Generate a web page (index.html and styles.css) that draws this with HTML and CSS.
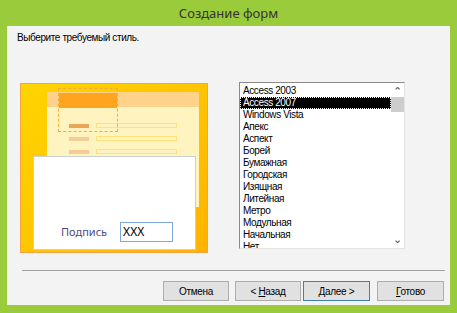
FILE: index.html
```html
<!DOCTYPE html>
<html lang="ru">
<head>
  <meta charset="UTF-8" />
  <title>Создание форм</title>
  <link rel="stylesheet" href="styles.css">
</head>
<body>

  <div class="ventana">
    <div class="titulo">Создание форм</div>

    <div class="contenido">
      <p class="aviso">Выберите требуемый стиль.</p>

      <div class="cuerpo">
        <div class="vista">
          <div class="forma">
            <div class="forma-cabecera"></div>
            <div class="fila"><span class="etiqueta oscura"></span><span class="campo"></span></div>
            <div class="fila"><span class="etiqueta"></span><span class="campo"></span></div>
            <div class="fila"><span class="etiqueta"></span><span class="campo"></span></div>
          </div>
          <div class="marco"><div class="marco-cabecera"></div></div>
          <div class="hoja">
            <span class="pie">Подпись</span>
            <span class="caja">XXX</span>
          </div>
        </div>

        <div class="lista">
          <ul class="items">
            <li>Access 2003</li>
            <li class="activo">Access 2007</li>
            <li>Windows Vista</li>
            <li>Апекс</li>
            <li>Аспект</li>
            <li>Борей</li>
            <li>Бумажная</li>
            <li>Городская</li>
            <li>Изящная</li>
            <li>Литейная</li>
            <li>Метро</li>
            <li>Модульная</li>
            <li>Начальная</li>
            <li>Нет</li>
          </ul>
          <div class="barra">
            <span class="flecha">&#8963;</span>
            <span class="cursor"></span>
            <span class="relleno"></span>
            <span class="flecha abajo">&#8964;</span>
          </div>
        </div>
      </div>

      <hr class="linea" />

      <div class="botones">
        <button>Отмена</button>
        <button class="pegado">&lt; <u>Н</u>азад</button>
        <button class="defecto"><u>Д</u>алее &gt;</button>
        <button class="ultimo"><u>Г</u>отово</button>
      </div>
    </div>
  </div>

</body>
</html>
```

FILE: styles.css
```css
* {
  box-sizing: border-box;
  margin: 0;
  padding: 0;
}

body {
  background: #9acb3a;
  font-family: 'Liberation Sans', Arial, sans-serif;
  font-size: 10px;
  letter-spacing: -0.4px;
  color: #000000;
}

.ventana {
  width: 457px;
  height: 313px;
  padding: 0 7px 8px 7px;
  display: flex;
  flex-direction: column;
}

.titulo {
  height: 26px;
  line-height: 27px;
  text-align: center;
  font-family: 'Noto Sans', sans-serif;
  font-size: 13px;
  letter-spacing: 0;
  color: #333333;
}

.contenido {
  flex: 1;
  background: #f3f3f3;
  padding: 5px 0 0 10px;
  display: flex;
  flex-direction: column;
}

.aviso {
  line-height: 13px;
}

.cuerpo {
  display: flex;
  align-items: flex-start;
  margin-top: 38px;
}

/* miniatura del estilo */
.vista {
  position: relative;
  width: 188px;
  height: 170px;
  margin: 1px 0 0 3px;
  border: 1px solid #f5a443;
  background: linear-gradient(135deg, #ffd400 0%, #ffc400 55%, #ffb300 100%);
}

.forma {
  position: absolute;
  left: 26px;
  top: 8px;
  width: 152px;
  height: 115px;
  background: #fff3c0;
}

.forma-cabecera {
  height: 15px;
  background: #ffd28c;
  margin-bottom: 12px;
}

.fila {
  display: flex;
  align-items: center;
  gap: 7px;
  height: 13px;
  padding-left: 22px;
}

.etiqueta {
  width: 20px;
  height: 4px;
  background: #f3cc98;
}

.etiqueta.oscura {
  background: #e9a55a;
}

.campo {
  width: 81px;
  height: 5px;
  border: 1px solid #fbe27a;
}

.marco {
  position: absolute;
  left: 37px;
  top: 4px;
  width: 60px;
  height: 44px;
  border: 1px dashed #f8ac38;
  padding-top: 4px;
}

.marco-cabecera {
  height: 15px;
  background: #ffa41e;
}

.hoja {
  position: absolute;
  left: 12px;
  top: 72px;
  width: 163px;
  height: 94px;
  background: #ffffff;
  border: 1px solid #c9d0dc;
  display: flex;
  align-items: flex-end;
  padding: 0 0 7px 27px;
}

.pie {
  font-family: 'Noto Sans', sans-serif;
  font-size: 11px;
  letter-spacing: 0;
  color: #4b4b7c;
  line-height: 20px;
  margin-right: 13px;
}

.caja {
  width: 53px;
  height: 20px;
  border: 1px solid #7fa8dc;
  padding-left: 2px;
  font-family: 'Noto Sans', sans-serif;
  font-size: 12px;
  letter-spacing: 0;
  line-height: 18px;
}

/* lista de estilos */
.lista {
  display: flex;
  width: 166px;
  height: 167px;
  margin-left: 31px;
  background: #ffffff;
  border-top: 1px solid #8a8a8a;
  border-left: 1px solid #8a8a8a;
  border-right: 1px solid #e4e4e4;
  border-bottom: 1px solid #e4e4e4;
  overflow: hidden;
}

.items {
  flex: 1;
  list-style: none;
  padding-top: 2px;
}

.items li {
  height: 12px;
  line-height: 12px;
  padding-left: 3px;
  white-space: nowrap;
}

.items li.activo {
  background: #000000;
  color: #ffffff;
  outline: 1px dotted #ffffff;
  outline-offset: -1px;
}

.barra {
  width: 13px;
  display: flex;
  flex-direction: column;
  align-items: center;
  background: #ffffff;
}

.flecha {
  height: 14px;
  line-height: 16px;
  font-size: 11px;
  letter-spacing: 0;
  color: #505050;
}

.flecha.abajo {
  line-height: 10px;
}

.cursor {
  width: 13px;
  height: 15px;
  background: #cdcdcd;
}

.relleno {
  flex: 1;
}

.linea {
  border: none;
  border-top: 1px solid #a0a0a0;
  margin: 17px 5px 0 5px;
}

.botones {
  display: flex;
  padding-left: 146px;
  margin-top: 10px;
}

.botones button {
  width: 66px;
  height: 20px;
  background: #e1e1e1;
  border: 1px solid #adadad;
  font-family: 'Liberation Sans', Arial, sans-serif;
  font-size: 10px;
  letter-spacing: -0.3px;
  color: #000000;
  margin-right: 6px;
}

.botones button.pegado {
  margin-right: 2px;
}

.botones button.defecto {
  width: 67px;
  border-color: #3c7fb1;
  margin-right: 7px;
}

.botones button.ultimo {
  width: 67px;
  margin-right: 0;
}
```
